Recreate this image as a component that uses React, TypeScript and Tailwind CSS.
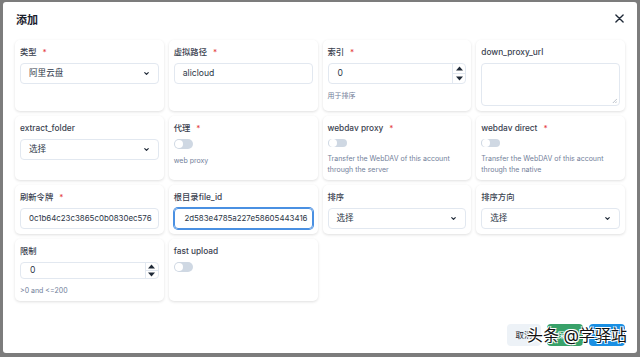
import { ReactNode } from "react";

const font = { fontFamily: '"Inter", "Noto Sans CJK SC", sans-serif' };

function Label({ text, required }: { text: string; required?: boolean }) {
  return (
    <div className="flex items-center h-[12px] text-[8.3px] leading-[12px] font-medium text-[#3a4250]">
      <span>{text}</span>
      {required && <span className="ml-[6px] text-[#e53e3e] text-[8px]">*</span>}
    </div>
  );
}

function Card({ children }: { children: ReactNode }) {
  return (
    <div className="bg-white rounded-[5px] shadow-[0_1px_3px_rgba(0,0,0,0.13)] px-[5px] pt-[6px] pb-[5px] flex flex-col">
      {children}
    </div>
  );
}

function Chevron() {
  return (
    <svg width="7" height="7" viewBox="0 0 24 24" fill="none" stroke="#1f2937" strokeWidth="4" strokeLinecap="round" strokeLinejoin="round">
      <path d="M6 9l6 6 6-6" />
    </svg>
  );
}

function Select({ value }: { value: string }) {
  return (
    <div className="mt-[5px] h-[21px] rounded-[4px] border border-[#e2e8f0] flex items-center justify-between pl-[8px] pr-[8px] text-[8.6px] text-[#2d3748]">
      <span>{value}</span>
      <Chevron />
    </div>
  );
}

function TextInput({ value, focused, small }: { value: string; focused?: boolean; small?: boolean }) {
  return (
    <div
      className={`mt-[5px] h-[21px] rounded-[4px] border flex items-center text-[#2d3748] ${
        small ? "text-[7.9px]" : "text-[8.6px]"
      } ${
        focused ? "border-[#4a90e2] shadow-[0_0_0_1px_#4a90e2] pl-[4px] pr-[4px] justify-end" : "border-[#e2e8f0] px-[8px]"
      }`}
    >
      <span className="whitespace-nowrap">{value}</span>
    </div>
  );
}

function NumberInput({ value }: { value: string }) {
  return (
    <div className="mt-[5px] h-[21px] rounded-[4px] border border-[#e2e8f0] flex items-stretch text-[8.6px] text-[#2d3748]">
      <div className="flex-1 flex items-center pl-[9px]">{value}</div>
      <div className="w-[13px] border-l border-[#e2e8f0] flex flex-col">
        <div className="flex-1 flex items-center justify-center border-b border-[#e2e8f0]">
          <svg width="7" height="5" viewBox="0 0 10 6"><path d="M5 0L10 6H0z" fill="#1f2937" /></svg>
        </div>
        <div className="flex-1 flex items-center justify-center">
          <svg width="7" height="5" viewBox="0 0 10 6"><path d="M0 0h10L5 6z" fill="#1f2937" /></svg>
        </div>
      </div>
    </div>
  );
}

function Toggle() {
  return (
    <div className="mt-[5px] w-[19px] h-[10px] rounded-full bg-[#cfd8e3] flex items-center pl-[1px]">
      <div className="w-[8px] h-[8px] rounded-full bg-white" />
    </div>
  );
}

function Help({ children }: { children: ReactNode }) {
  return <div className="mt-[6px] text-[7px] leading-[11px] whitespace-nowrap text-[#72809a]">{children}</div>;
}

export default function App() {
  return (
    <div style={font} className="w-[640px] h-[357px] bg-[#7c7c7c] pl-[3px] pr-[3px] pt-[2px] pb-[4px]">
      <div className="relative h-full bg-white rounded-[3px] flex flex-col">
        <div className="h-[38px] flex items-start justify-between pl-[13px] pr-[13px] pt-[11px]">
          <span className="text-[11px] leading-[14px] font-semibold text-[#1a202c]">添加</span>
          <svg className="mt-[1px]" width="9" height="9" viewBox="0 0 10 10" stroke="#1f2937" strokeWidth="1.5" strokeLinecap="round">
            <path d="M1 1l8 8M9 1L1 9" />
          </svg>
        </div>

        <div className="grid grid-cols-4 grid-rows-[71px_64px_49px_62px] gap-x-[5px] gap-y-[5px] px-[12px]">
          <Card>
            <Label text="类型" required />
            <Select value="阿里云盘" />
          </Card>
          <Card>
            <Label text="虚拟路径" required />
            <TextInput value="alicloud" />
          </Card>
          <Card>
            <Label text="索引" required />
            <NumberInput value="0" />
            <Help>用于排序</Help>
          </Card>
          <Card>
            <Label text="down_proxy_url" />
            <div className="mt-[5px] h-[43px] rounded-[4px] border border-[#e2e8f0] relative">
              <svg className="absolute right-[2px] bottom-[2px]" width="5" height="5" viewBox="0 0 6 6" stroke="#9aa3af" strokeWidth="0.8">
                <path d="M6 1L1 6M6 4L4 6" />
              </svg>
            </div>
          </Card>

          <Card>
            <Label text="extract_folder" />
            <Select value="选择" />
          </Card>
          <Card>
            <Label text="代理" required />
            <Toggle />
            <Help>web proxy</Help>
          </Card>
          <Card>
            <Label text="webdav proxy" required />
            <Toggle />
            <Help>
              Transfer the WebDAV of this account
              <br />
              through the server
            </Help>
          </Card>
          <Card>
            <Label text="webdav direct" required />
            <Toggle />
            <Help>
              Transfer the WebDAV of this account
              <br />
              through the native
            </Help>
          </Card>

          <Card>
            <Label text="刷新令牌" required />
            <TextInput value="0c1b64c23c3865c0b0830ec576" small />
          </Card>
          <Card>
            <Label text="根目录file_id" />
            <TextInput value="2d583e4785a227e58605443416" focused small />
          </Card>
          <Card>
            <Label text="排序" />
            <Select value="选择" />
          </Card>
          <Card>
            <Label text="排序方向" />
            <Select value="选择" />
          </Card>

          <Card>
            <Label text="限制" />
            <NumberInput value="0" />
            <Help>&gt;0 and &lt;=200</Help>
          </Card>
          <Card>
            <Label text="fast upload" />
            <Toggle />
          </Card>
        </div>

        <div className="mt-auto flex justify-end gap-[6px] pr-[12px] pb-[7px]">
          <button className="h-[22px] w-[34px] rounded-[4px] bg-[#edf2f7] text-[8.5px] text-[#1a202c]">取消</button>
          <button className="h-[22px] w-[36px] rounded-[4px] bg-[#38a169] text-[8.5px] text-white">保存</button>
          <button className="h-[22px] w-[36px] rounded-[4px] bg-[#1a8fe3] text-[8.5px] text-white">添加</button>
        </div>

        <div
          className="absolute right-[10px] bottom-[8px] text-[16px] leading-[20px] text-[#111] whitespace-nowrap"
          style={{ textShadow: "1px 1px 0 #fff, -1px -1px 0 #fff, 1px -1px 0 #fff, -1px 1px 0 #fff" }}
        >
          头条 @学驿站
        </div>
      </div>
    </div>
  );
}
